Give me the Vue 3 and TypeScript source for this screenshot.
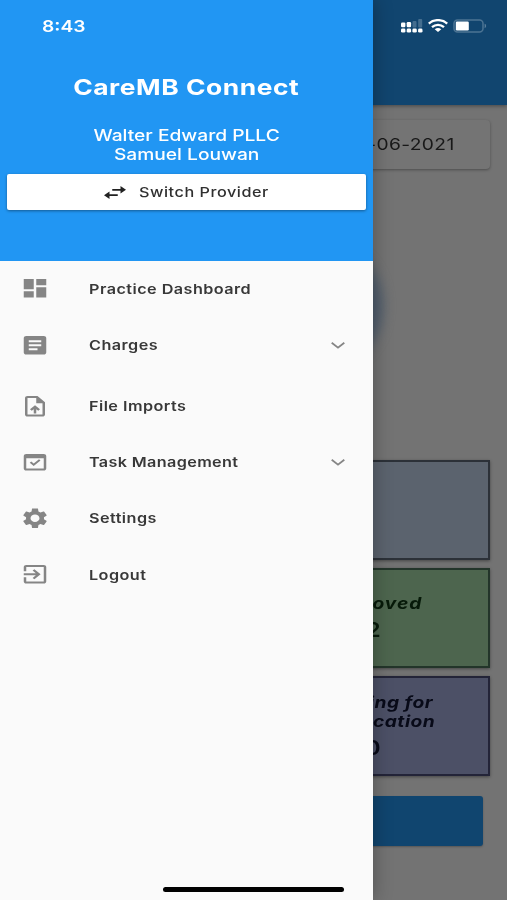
<script setup lang="ts">
interface MenuItem {
  key: string
  label: string
  path: string
  expandable?: boolean
}

const menu: MenuItem[] = [
  { key: 'dashboard', label: 'Practice Dashboard', path: 'M3 13h8V3H3v10zm0 8h8v-6H3v6zm10 0h8V11h-8v10zm0-18v6h8V3h-8z' },
  { key: 'charges', label: 'Charges', expandable: true, path: 'M19 3H5c-1.1 0-2 .9-2 2v14c0 1.1.9 2 2 2h14c1.1 0 2-.9 2-2V5c0-1.1-.9-2-2-2zm-5 14H7v-2h7v2zm3-4H7v-2h10v2zm0-4H7V7h10v2z' },
  { key: 'imports', label: 'File Imports', path: 'M14 2H6c-1.1 0-2 .9-2 2v16c0 1.1.9 2 2 2h12c1.1 0 2-.9 2-2V8l-6-6zm4 18H6V4h7v5h5v11zM8 15.01l1.41 1.41L11 14.84V19h2v-4.16l1.59 1.59L16 15.01 12.01 11z' },
  { key: 'tasks', label: 'Task Management', expandable: true, path: 'M19 4H5c-1.11 0-2 .9-2 2v12c0 1.1.89 2 2 2h14c1.1 0 2-.9 2-2V6c0-1.1-.89-2-2-2zm0 14H5V8h14v10zm-2.6-7.8L15.200 9l-4.250 4.250-1.950-1.950-1.200 1.200 3.150 3.150z' },
  { key: 'settings', label: 'Settings', path: 'M19.14 12.94c.04-.3.06-.61.06-.94 0-.32-.02-.64-.07-.94l2.03-1.58c.18-.14.23-.41.12-.61l-1.92-3.32c-.12-.22-.37-.29-.59-.22l-2.39.96c-.5-.38-1.03-.7-1.62-.94l-.36-2.54c-.04-.24-.24-.41-.48-.41h-3.84c-.24 0-.43.17-.47.41l-.36 2.54c-.59.24-1.13.57-1.62.94l-2.39-.96c-.22-.08-.47 0-.59.22L2.74 8.87c-.12.21-.08.47.12.61l2.03 1.58c-.05.3-.09.63-.09.94s.02.64.07.94l-2.03 1.58c-.18.14-.23.41-.12.61l1.92 3.32c.12.22.37.29.59.22l2.39-.96c.5.38 1.03.7 1.62.94l.36 2.54c.05.24.24.41.48.41h3.84c.24 0 .44-.17.47-.41l.36-2.54c.59-.24 1.13-.56 1.62-.94l2.39.96c.22.08.47 0 .59-.22l1.92-3.32c.12-.22.07-.47-.12-.61l-2.01-1.58zM12 15.6c-1.98 0-3.6-1.62-3.6-3.6s1.62-3.6 3.6-3.6 3.6 1.62 3.6 3.6-1.62 3.6-3.6 3.6z' },
  { key: 'logout', label: 'Logout', path: 'M10.09 15.59L11.5 17l5-5-5-5-1.41 1.41L12.67 11H3v2h9.67l-2.58 2.59zM19 3H5c-1.11 0-2 .9-2 2v4h2V5h14v14H5v-4H3v4c0 1.1.89 2 2 2h14c1.1 0 2-.9 2-2V5c0-1.1-.9-2-2-2z' },
]
</script>

<template>
  <div class="screen">
    <div class="page">
      <header class="appbar">
        <svg class="signal" viewBox="0 0 22 14">
          <g fill="#fff">
            <rect x="0" y="3.600" width="4.400" height="4.600" rx="1.200" /><rect x="5.700" y="3" width="4.400" height="5.200" rx="1.200" />
            <rect x="0" y="9.600" width="4.400" height="4" rx="1.400" /><rect x="5.700" y="9.600" width="4.400" height="4" rx="1.400" />
            <rect x="11.400" y="9.600" width="4.400" height="4" rx="1.400" /><rect x="17.100" y="9.600" width="4.400" height="4" rx="1.400" />
          </g>
          <g fill="#fff" opacity=".22">
            <rect x="11.500" y="2" width="4" height="6.400" rx="1" /><rect x="17.200" y="0" width="4" height="8.400" rx="1" />
          </g>
        </svg>
        <svg class="wifi" viewBox="0 0 20 13" preserveAspectRatio="none">
          <g fill="none" stroke="#fff" stroke-width="2.400">
            <path d="M.8 4.600C6 0 14 0 19.200 4.600" />
            <path d="M4 8.100c3.500-3 8.500-3 12 0" />
          </g>
          <path d="M6.700 10.200c2-1.500 4.600-1.500 6.600 0L10 13z" fill="#fff" />
        </svg>
        <svg class="battery" viewBox="0 0 34 14">
          <rect x="1" y=".9" width="29" height="12.200" rx="3.500" fill="none" stroke="#fff" stroke-opacity=".25" stroke-width="1.500" />
          <rect x="2.800" y="2.600" width="13" height="8.800" rx="1.200" fill="#fff" />
          <path d="M31.600 4.800c2 .6 2 3.800 0 4.400z" fill="#fff" opacity=".3" />
        </svg>
      </header>
      <div class="date-card"><span class="wide right">12-06-2021</span></div>
      <div class="chart"><div class="glow"></div></div>
      <div class="stats">
        <section class="stat blue"></section>
        <section class="stat green">
          <h3><span class="wide">Approved</span></h3>
          <b><span class="wide">2</span></b>
        </section>
        <section class="stat purple">
          <h3><span class="wide">Awaiting for</span><br /><span class="wide">Clarification</span></h3>
          <b><span class="wide">0</span></b>
        </section>
      </div>
      <div class="action"></div>
    </div>

    <aside class="drawer">
      <div class="head">
        <div class="time"><span class="wide left">8:43</span></div>
        <h1><span class="wide">CareMB Connect</span></h1>
        <p class="who"><span class="wide">Walter Edward PLLC</span></p>
        <p class="who second"><span class="wide">Samuel Louwan</span></p>
        <button class="switch">
          <svg viewBox="0 0 24 14" preserveAspectRatio="none">
            <path d="M9 3.200h9V0l6 4-6 4V5H9zM15 9v1.800H6V14l-6-4 6-4v3z" fill="#222" />
          </svg>
          <span class="wide left">Switch Provider</span>
        </button>
      </div>
      <nav>
        <div v-for="item in menu" :key="item.key" class="item" :class="item.key">
          <svg class="icon" viewBox="0 0 24 24" preserveAspectRatio="none"><path :d="item.path" fill-rule="evenodd" /></svg>
          <span class="wide left label">{{ item.label }}</span>
          <svg v-if="item.expandable" class="chevron" viewBox="0 0 14 7" preserveAspectRatio="none">
            <path d="M.7.8 7 5.700 13.300.8" />
          </svg>
        </div>
      </nav>
      <div class="home"></div>
    </aside>
  </div>
</template>

<style>
body { margin: 0; }
</style>

<style scoped>
* { box-sizing: border-box; }
.screen {
  position: relative;
  width: 507px;
  height: 900px;
  overflow: hidden;
  background: #737373;
  font-family: Inter, "Liberation Sans", sans-serif;
}
.wide { display: inline-block; transform: scaleX(1.2); white-space: nowrap; }
.left { transform-origin: 0 50%; }
.right { transform-origin: 100% 50%; }
.page { display: flex; flex-direction: column; height: 100%; }
.appbar {
  display: flex;
  flex: none;
  height: 105px;
  padding: 19px 20px 0 401px;
  background: #11456f;
  box-shadow: 0 1px 4px rgba(0, 0, 0, .4);
}
.signal { width: 22px; height: 14px; }
.wifi { width: 20px; height: 13px; margin-left: 5px; }
.battery { width: 34px; height: 14px; margin-left: 5px; }
.date-card {
  display: flex;
  flex: none;
  align-items: center;
  justify-content: flex-end;
  width: 473px;
  height: 49px;
  margin: 15px 0 0 17px;
  padding: 0 35px 1px 0;
  border-radius: 4px;
  background: #747474;
  box-shadow: 0 1px 3px rgba(0, 0, 0, .35);
  color: #181818;
  font-size: 16px;
  letter-spacing: .3px;
}
.chart { flex: none; height: 291px; padding: 78px 0 0 283px; }
.glow { width: 100px; height: 118px; border-radius: 50%; background: #4e5c6c; filter: blur(6px); }
.stats { display: flex; flex: none; flex-direction: column; gap: 8px; width: 234px; margin-left: 256px; }
.stat {
  display: flex;
  flex-direction: column;
  align-items: center;
  justify-content: center;
  height: 100px;
  border: 2px solid #2c3138;
  box-shadow: 0 1px 3px rgba(0, 0, 0, .4);
  text-align: center;
}
.stat h3 { margin: 1px 0 0; font-size: 16px; font-style: italic; font-weight: 700; line-height: 19px; letter-spacing: .4px; }
.stat.green h3 { margin-top: 0; letter-spacing: .8px; }
.stat b { margin-top: 5px; font-size: 20px; font-weight: 600; line-height: 24px; }
.blue { background: #5b636e; }
.green { background: #4d654e; border-color: #23352a; color: #071a09; }
.purple { background: #4c5066; border-color: #232438; color: #080a18; }
.action { flex: none; width: 460px; height: 50px; margin: 20px 0 0 23px; border-radius: 3px; background: #10456f; box-shadow: 0 1px 2px rgba(0, 0, 0, .25); }
.drawer {
  position: absolute;
  top: 0;
  left: 0;
  display: flex;
  flex-direction: column;
  width: 372.500px;
  height: 900px;
  background: #fafafa;
  box-shadow: 0 0 18px rgba(0, 0, 0, .3);
}
.head { flex: none; height: 260.500px; padding: 15px 6.500px 0 7px; background: #2196f3; color: #fff; text-align: center; }
.time { height: 22px; padding-left: 35px; font-size: 16px; font-weight: 600; line-height: 22px; text-align: left; }
h1 { margin: 35px 0 0; font-size: 22px; font-weight: 700; line-height: 30px; letter-spacing: .45px; }
.who { margin: 24px 0 0; font-size: 16px; font-weight: 500; line-height: 19px; }
.second { margin-top: 0; }
.switch {
  display: flex;
  align-items: center;
  width: 359px;
  height: 36px;
  margin-top: 10px;
  padding: 0 0 0 97px;
  border: 0;
  border-radius: 2px;
  background: #fff;
  box-shadow: 0 1px 3px rgba(0, 0, 0, .4);
  color: #303030;
  font: 500 13.500px Inter, sans-serif;
  letter-spacing: .45px;
}
.switch svg { width: 22px; height: 13px; margin-right: 13px; }
.item { display: flex; align-items: center; height: 56.200px; padding-left: 20px; color: #383838; font-size: 13.500px; font-weight: 600; letter-spacing: .38px; }
.tasks { letter-spacing: .3px; }
.imports { margin-top: 5px; }
.icon { flex: none; width: 30px; height: 24.500px; margin-right: 39px; fill: #858585; }
.chevron { width: 14px; height: 7px; margin: 1px 27.500px 0 auto; fill: none; stroke: #858585; stroke-width: 1.800; }
.home { width: 181px; height: 5px; margin: auto 0 8px 163px; border-radius: 3px; background: #000; }
</style>
